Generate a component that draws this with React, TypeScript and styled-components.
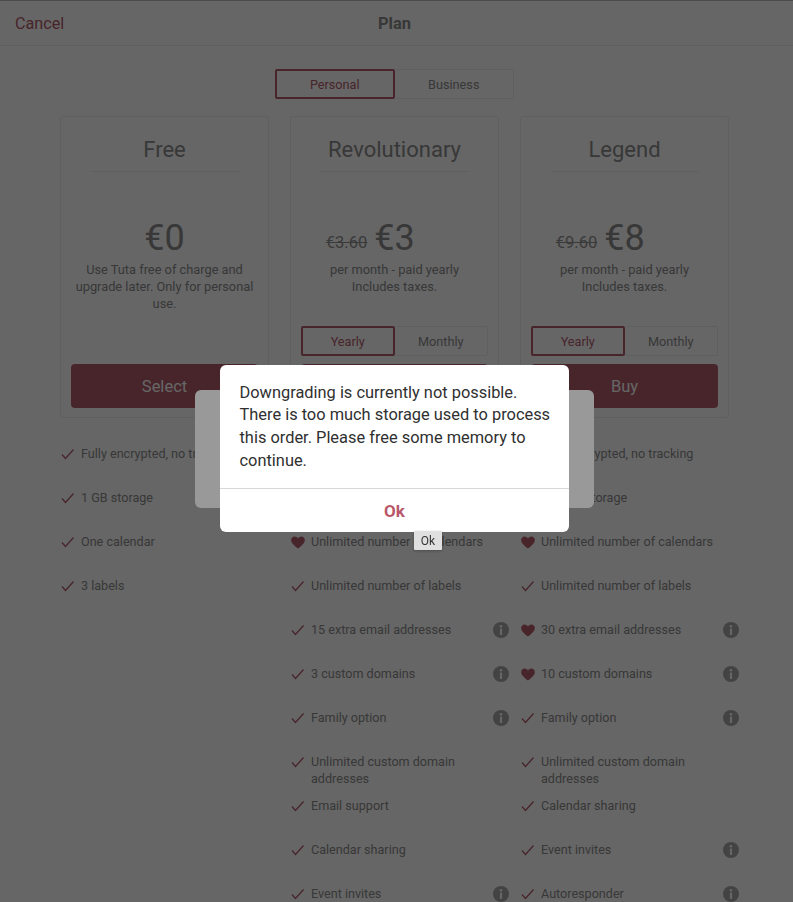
import React from "react";
import styled, { createGlobalStyle } from "styled-components";

const Global = createGlobalStyle`
  html, body { margin: 0; padding: 0; background: #fff; height: 100%; overflow: hidden; }
  body { font-family: "Roboto", "Liberation Sans", sans-serif; color: #8c8c8c; }
  * { box-sizing: border-box; }
`;

const accent = "#b35b6c";
const faint = "#ededed";

const Page = styled.div`
  width: 793px;
  height: 902px;
  overflow: hidden;
  border-top: 1px solid #bbb;
`;
const Header = styled.header`
  height: 45px;
  display: flex;
  align-items: center;
  justify-content: center;
  position: relative;
  padding-right: 4px;
  border-bottom: 1px solid ${faint};
`;
const Cancel = styled.span`
  position: absolute;
  left: 15px;
  font-size: 16.2px;
  color: ${accent};
`;
const HeaderTitle = styled.h1`
  margin: 0;
  font-size: 16.5px;
  font-weight: 700;
  color: #8c8c8c;
`;
const Tabs = styled.div<{ $w: number }>`
  display: grid;
  grid-template-columns: 1fr 1fr;
  width: ${(p) => p.$w}px;
  height: 30px;
`;
const TopTabs = styled.div`
  display: flex;
  justify-content: center;
  margin-top: 23px;
  padding-right: 4px;
`;
const Tab = styled.div<{ $active?: boolean }>`
  display: flex;
  align-items: center;
  justify-content: center;
  font-size: 12.7px;
  border-radius: 2px;
  color: ${(p) => (p.$active ? accent : "#8c8c8c")};
  border: ${(p) => (p.$active ? `2px solid ${accent}` : `1px solid ${faint}`)};
  ${(p) => (p.$active ? "" : "border-left: none;")}
`;
const Columns = styled.div`
  display: grid;
  grid-template-columns: repeat(3, 209px);
  column-gap: 21px;
  margin: 17px 0 0 60px;
`;
const Column = styled.section`
  min-width: 0;
`;
const Card = styled.div`
  height: 302px;
  border: 1px solid ${faint};
  border-radius: 3px;
  padding: 0 10px;
  display: flex;
  flex-direction: column;
  align-items: center;
`;
const CardTitle = styled.h2`
  margin: 0;
  width: 148px;
  height: 55px;
  padding-top: 20px;
  font-size: 22px;
  font-weight: 400;
  line-height: 26px;
  text-align: center;
  white-space: nowrap;
  color: #8c8c8c;
  border-bottom: 1px solid ${faint};
`;
const PriceRow = styled.div`
  display: grid;
  grid-template-columns: 1fr auto 1fr;
  align-items: start;
  column-gap: 7px;
  width: 100%;
  margin-top: 44px;
  height: 44px;
  line-height: 44px;
`;
const Price = styled.span`
  grid-column: 2;
  font-size: 36px;
  color: #8c8c8c;
`;
const OldPrice = styled.s`
  grid-column: 1;
  grid-row: 1;
  justify-self: end;
  margin-top: 5px;
  font-size: 16.5px;
  color: #929292;
`;
const Desc = styled.p`
  margin: 1px 0 0;
  font-size: 12.8px;
  line-height: 17px;
  text-align: center;
  color: #8c8c8c;
  height: 51px;
`;
const Spacer = styled.div`
  flex: 1;
`;
const CardTabs = styled.div`
  margin-bottom: 8px;
`;
const ActionButton = styled.div`
  flex: none;
  width: 100%;
  height: 44px;
  margin-bottom: 9px;
  background: ${accent};
  border-radius: 4px;
  color: #fff;
  font-size: 16.5px;
  display: flex;
  align-items: center;
  justify-content: center;
`;
const Features = styled.ul`
  list-style: none;
  margin: 27px 0 0;
  padding: 0;
`;
const Feature = styled.li`
  min-height: 44px;
  padding-bottom: 10px;
  display: grid;
  grid-template-columns: 21px 1fr 16px;
  margin-right: -10px;
  font-size: 12.6px;
  line-height: 17px;
  color: #8c8c8c;
`;
const FeatureIcon = styled.span`
  display: flex;
  align-items: center;
  height: 17px;
  color: ${accent};
`;
const InfoWrap = styled.span`
  display: flex;
  align-items: center;
  height: 17px;
`;

const CheckIcon = () => (
  <svg width="16" height="16" viewBox="0 0 16 16" fill="none" stroke="currentColor" strokeWidth="1.3">
    <path d="M2 8.5 L5.5 12.5 L13.5 3.5" />
  </svg>
);
const HeartIcon = () => (
  <svg width="16" height="16" viewBox="0 0 16 16" fill="currentColor">
    <path d="M8 14.6 C3 10.6 1.2 8.8 1.2 6 C1.2 3.8 2.8 2.4 4.6 2.4 C6 2.4 7.3 3.1 8 4.4 C8.7 3.1 10 2.4 11.4 2.4 C13.2 2.4 14.8 3.8 14.8 6 C14.8 8.8 13 10.6 8 14.6 Z" />
  </svg>
);
const InfoIcon = () => (
  <svg width="16" height="16" viewBox="0 0 16 16">
    <circle cx="8" cy="8" r="8" fill="#a8a8a8" />
    <circle cx="8" cy="4.2" r="1.3" fill="#fff" />
    <rect x="6.9" y="6.5" width="2.2" height="6.4" rx="0.5" fill="#fff" />
  </svg>
);

type Row = { t: string; heart?: boolean; info?: boolean };

const plans: {
  name: string;
  price: string;
  old?: string;
  desc: React.ReactNode;
  action: string;
  rows: Row[];
}[] = [
  {
    name: "Free",
    price: "€0",
    desc: "Use Tuta free of charge and upgrade later. Only for personal use.",
    action: "Select",
    rows: [
      { t: "Fully encrypted, no tracking" },
      { t: "1 GB storage" },
      { t: "One calendar" },
      { t: "3 labels" },
    ],
  },
  {
    name: "Revolutionary",
    price: "€3",
    old: "€3.60",
    desc: (
      <>
        per month - paid yearly
        <br />
        Includes taxes.
      </>
    ),
    action: "Buy",
    rows: [
      { t: "Fully encrypted, no tracking" },
      { t: "20 GB storage" },
      { t: "Unlimited number of calendars", heart: true },
      { t: "Unlimited number of labels" },
      { t: "15 extra email addresses", info: true },
      { t: "3 custom domains", info: true },
      { t: "Family option", info: true },
      { t: "Unlimited custom domain addresses" },
      { t: "Email support" },
      { t: "Calendar sharing" },
      { t: "Event invites", info: true },
    ],
  },
  {
    name: "Legend",
    price: "€8",
    old: "€9.60",
    desc: (
      <>
        per month - paid yearly
        <br />
        Includes taxes.
      </>
    ),
    action: "Buy",
    rows: [
      { t: "Fully encrypted, no tracking" },
      { t: "500 GB storage" },
      { t: "Unlimited number of calendars", heart: true },
      { t: "Unlimited number of labels" },
      { t: "30 extra email addresses", heart: true, info: true },
      { t: "10 custom domains", heart: true, info: true },
      { t: "Family option", info: true },
      { t: "Unlimited custom domain addresses" },
      { t: "Calendar sharing" },
      { t: "Event invites", info: true },
      { t: "Autoresponder", info: true },
    ],
  },
];

const Overlay = styled.div<{ $a: number }>`
  position: fixed;
  inset: 0;
  background: rgba(0, 0, 0, ${(p) => p.$a});
`;
const Dialog = styled.div`
  position: fixed;
  background: #fff;
  border-radius: 6px;
`;
const BackDialog = styled(Dialog)`
  left: 195px;
  top: 390px;
  width: 399px;
  height: 118px;
`;
const FrontDialog = styled(Dialog)`
  left: 220px;
  top: 365px;
  width: 349px;
  height: 167px;
  display: flex;
  flex-direction: column;
`;
const Message = styled.p`
  margin: 0;
  padding: 16.5px 15px 0 19.5px;
  height: 124px;
  font-size: 16.4px;
  line-height: 22.8px;
  color: #303030;
  border-bottom: 1px solid #d8d8d8;
`;
const OkButton = styled.div`
  flex: 1;
  display: flex;
  align-items: center;
  justify-content: center;
  font-size: 17px;
  font-weight: 700;
  color: #b8566a;
`;
const Tooltip = styled.div`
  position: fixed;
  left: 414px;
  top: 531px;
  width: 28px;
  height: 19px;
  background: #e0e0e0;
  border-radius: 1px;
  box-shadow: 0 1px 3px rgba(0, 0, 0, 0.25);
  display: flex;
  align-items: center;
  justify-content: center;
  font-size: 12px;
  color: #333;
`;

export default function App() {
  return (
    <>
      <Global />
      <Page>
        <Header>
          <Cancel>Cancel</Cancel>
          <HeaderTitle>Plan</HeaderTitle>
        </Header>
        <TopTabs>
          <Tabs $w={239}>
            <Tab $active>Personal</Tab>
            <Tab>Business</Tab>
          </Tabs>
        </TopTabs>
        <Columns>
          {plans.map((p) => (
            <Column key={p.name}>
              <Card>
                <CardTitle>{p.name}</CardTitle>
                <PriceRow>
                  {p.old && <OldPrice>{p.old}</OldPrice>}
                  <Price>{p.price}</Price>
                </PriceRow>
                <Desc>{p.desc}</Desc>
                <Spacer />
                {p.old && (
                  <CardTabs>
                    <Tabs $w={187}>
                      <Tab $active>Yearly</Tab>
                      <Tab>Monthly</Tab>
                    </Tabs>
                  </CardTabs>
                )}
                <ActionButton>{p.action}</ActionButton>
              </Card>
              <Features>
                {p.rows.map((r) => (
                  <Feature key={r.t}>
                    <FeatureIcon>{r.heart ? <HeartIcon /> : <CheckIcon />}</FeatureIcon>
                    <span>{r.t}</span>
                    <InfoWrap>{r.info && <InfoIcon />}</InfoWrap>
                  </Feature>
                ))}
              </Features>
            </Column>
          ))}
        </Columns>
      </Page>
      <Overlay $a={0.3333} />
      <BackDialog />
      <Overlay $a={0.4} />
      <FrontDialog>
        <Message>
          Downgrading is currently not possible. There is too much storage used to process this order. Please free some
          memory to continue.
        </Message>
        <OkButton>Ok</OkButton>
      </FrontDialog>
      <Tooltip>Ok</Tooltip>
    </>
  );
}
